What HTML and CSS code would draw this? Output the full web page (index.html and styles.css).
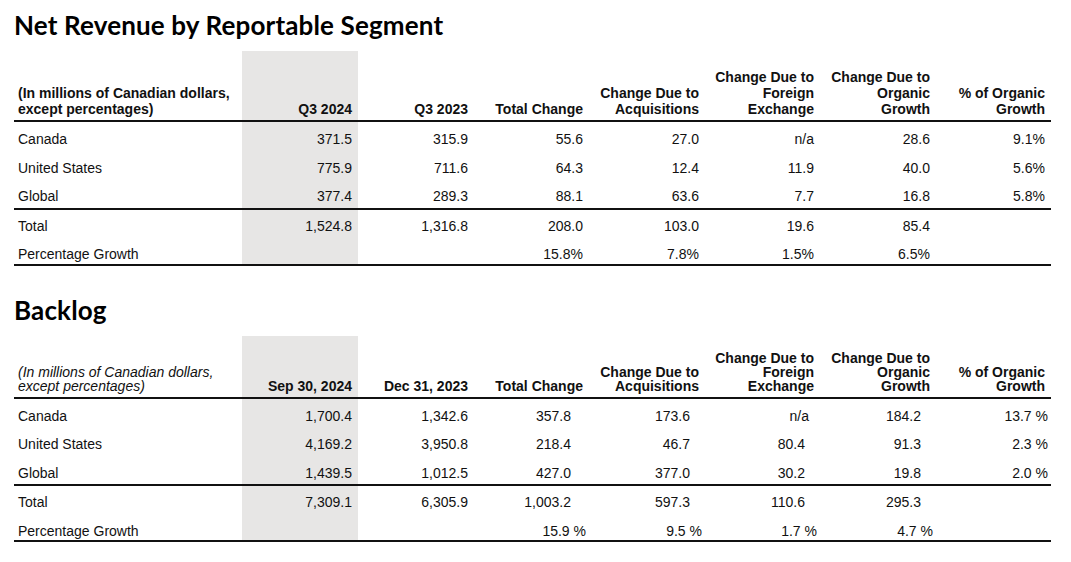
FILE: index.html
```html
<!DOCTYPE html>
<html lang="en">
<head>
<meta charset="utf-8">
<title>Net Revenue by Reportable Segment</title>
<link rel="stylesheet" href="styles.css">
</head>
<body>
<main class="page">
  <h2 class="title title-first">Net Revenue by Reportable Segment</h2>
  <table class="fin t1">
    <colgroup>
      <col class="c-label"><col class="c-num"><col class="c-num"><col class="c-num3"><col class="c-num"><col class="c-num3"><col class="c-num"><col class="c-num3">
    </colgroup>
    <thead>
      <tr>
        <th class="lbl">(In millions of Canadian dollars,<br>except percentages)</th>
        <th class="shade">Q3 2024</th>
        <th>Q3 2023</th>
        <th>Total Change</th>
        <th>Change Due to<br>Acquisitions</th>
        <th>Change Due to<br>Foreign<br>Exchange</th>
        <th>Change Due to<br>Organic<br>Growth</th>
        <th>% of Organic<br>Growth</th>
      </tr>
    </thead>
    <tbody>
      <tr><td class="lbl">Canada</td><td class="shade">371.5</td><td>315.9</td><td>55.6</td><td>27.0</td><td>n/a</td><td>28.6</td><td>9.1%</td></tr>
      <tr><td class="lbl">United States</td><td class="shade">775.9</td><td>711.6</td><td>64.3</td><td>12.4</td><td>11.9</td><td>40.0</td><td>5.6%</td></tr>
      <tr class="sub-end"><td class="lbl">Global</td><td class="shade">377.4</td><td>289.3</td><td>88.1</td><td>63.6</td><td>7.7</td><td>16.8</td><td>5.8%</td></tr>
      <tr class="total"><td class="lbl">Total</td><td class="shade">1,524.8</td><td>1,316.8</td><td>208.0</td><td>103.0</td><td>19.6</td><td>85.4</td><td></td></tr>
      <tr class="end"><td class="lbl">Percentage Growth</td><td class="shade"></td><td></td><td>15.8%</td><td>7.8%</td><td>1.5%</td><td>6.5%</td><td></td></tr>
    </tbody>
  </table>

  <h2 class="title title-second">Backlog</h2>
  <table class="fin t2">
    <colgroup>
      <col class="c-label"><col class="c-num"><col class="c-num"><col class="c-num3"><col class="c-num"><col class="c-num3"><col class="c-num"><col class="c-num3">
    </colgroup>
    <thead>
      <tr>
        <th class="lbl ital">(In millions of Canadian dollars,<br>except percentages)</th>
        <th class="shade">Sep 30, 2024</th>
        <th>Dec 31, 2023</th>
        <th>Total Change</th>
        <th>Change Due to<br>Acquisitions</th>
        <th>Change Due to<br>Foreign<br>Exchange</th>
        <th>Change Due to<br>Organic<br>Growth</th>
        <th>% of Organic<br>Growth</th>
      </tr>
    </thead>
    <tbody>
      <tr><td class="lbl">Canada</td><td class="shade">1,700.4</td><td>1,342.6</td><td class="n">357.8</td><td class="n">173.6</td><td class="na">n/a</td><td class="n">184.2</td><td class="p">13.7 %</td></tr>
      <tr><td class="lbl">United States</td><td class="shade">4,169.2</td><td>3,950.8</td><td class="n">218.4</td><td class="n">46.7</td><td class="n">80.4</td><td class="n">91.3</td><td class="p">2.3 %</td></tr>
      <tr class="sub-end"><td class="lbl">Global</td><td class="shade">1,439.5</td><td>1,012.5</td><td class="n">427.0</td><td class="n">377.0</td><td class="n">30.2</td><td class="n">19.8</td><td class="p">2.0 %</td></tr>
      <tr class="total"><td class="lbl">Total</td><td class="shade">7,309.1</td><td>6,305.9</td><td class="n">1,003.2</td><td class="n">597.3</td><td class="n">110.6</td><td class="n">295.3</td><td></td></tr>
      <tr class="end"><td class="lbl">Percentage Growth</td><td class="shade"></td><td></td><td class="p">15.9 %</td><td class="p">9.5 %</td><td class="p">1.7 %</td><td class="p">4.7 %</td><td></td></tr>
    </tbody>
  </table>
</main>
</body>
</html>
```

FILE: styles.css
```css
* { box-sizing: border-box; }

html, body {
  margin: 0;
  padding: 0;
  background: #ffffff;
}

body {
  font-family: "Liberation Sans", Arial, sans-serif;
  color: #111111;
}

.page {
  width: 1071px;
  padding: 10px 20px 0 14px;
}

.title {
  margin: 0;
  font-family: "Lato", "DejaVu Sans", sans-serif;
  font-weight: 700;
  font-size: 26px;
  letter-spacing: 0.15px;
  line-height: 31px;
  color: #000000;
}

.title-second {
  margin-top: 29px;
}

.fin {
  width: 1037px;
  table-layout: fixed;
  border-collapse: collapse;
  font-size: 14px;
}

.t1 { margin-top: 10px; }
.t2 { margin-top: 10px; }

.c-label { width: 228px; }
.c-num { width: 116px; }
.c-num3 { width: 115px; }

.fin th {
  font-weight: 700;
  text-align: right;
  vertical-align: bottom;
  padding: 0 6px 3px 0;
  white-space: nowrap;
  border-bottom: 2px solid #111111;
}

.t1 th { line-height: 16px; }
.t1 thead tr { height: 70px; }

.t2 th { line-height: 14px; padding-bottom: 4px; }
.t2 thead tr { height: 62px; }

.fin th.lbl {
  text-align: left;
  padding-left: 4px;
}

.fin th.ital {
  font-weight: 400;
  font-style: italic;
}

.fin td {
  text-align: right;
  line-height: 16px;
  padding: 9px 6px 3.5px 0;
  white-space: nowrap;
}

.fin .total td { padding-top: 8px; }
.fin .end td { padding-bottom: 1.5px; }

.fin td.lbl {
  text-align: left;
  padding-left: 4px;
}

.fin .shade {
  background: #e7e6e5;
}

.sub-end td,
.end td {
  border-bottom: 2px solid #111111;
}

.t2 td.n { padding-right: 15px; }
.t2 td:nth-child(4).n { padding-right: 18px; }
.t2 td.na { padding-right: 11px; }
.t2 td.p { padding-right: 3px; }
```
